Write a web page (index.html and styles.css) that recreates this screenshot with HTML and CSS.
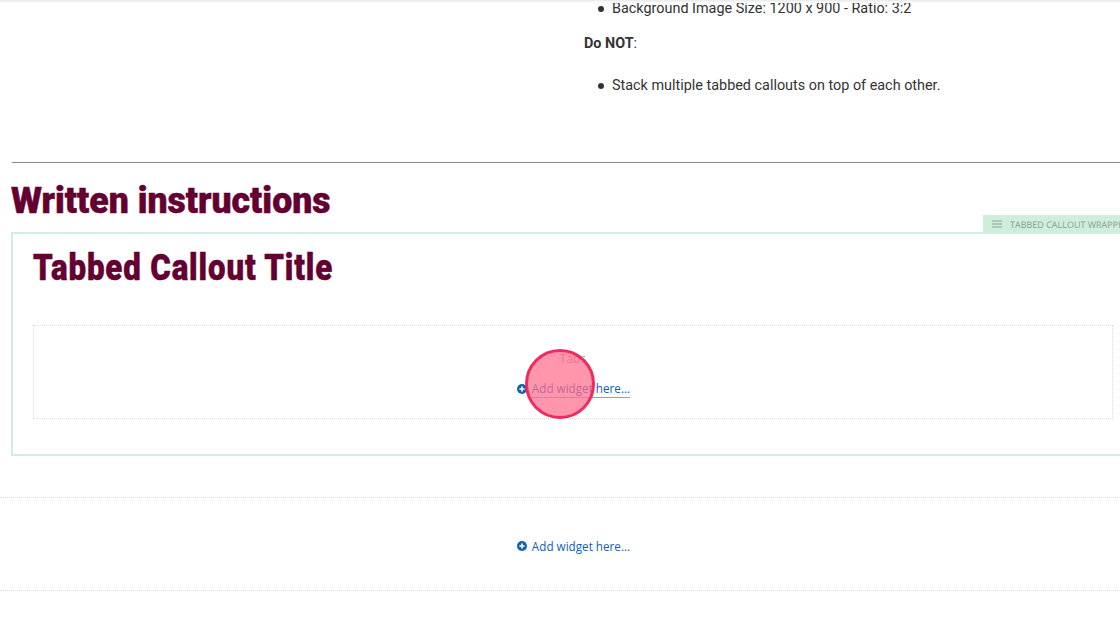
FILE: index.html
```html
<!DOCTYPE html>
<html lang="en">
<head>
    <meta charset="UTF-8">
    <meta name="viewport" content="width=device-width, initial-scale=1.0">
    <title>Written instructions</title>
    <link rel="stylesheet" href="styles.css">
</head>
<body>
    <div class="top-shadow"></div>
    <div class="page">
        <div class="notes">
            <ul>
                <li>Background Image Size: 1200 x 900 - Ratio: 3:2</li>
            </ul>
            <p><strong>Do NOT</strong>:</p>
            <ul>
                <li>Stack multiple tabbed callouts on top of each other.</li>
            </ul>
        </div>
        <hr class="rule">
        <h2 class="section-title">Written instructions</h2>
        <div class="wrapper">
            <div class="wrapper-tag">
                <svg class="tag-icon" viewBox="0 0 10 8" width="10" height="8"><path d="M0 1h10M0 4h10M0 7h10" stroke="#8f9c94" stroke-width="1.2"/></svg>
                <span>TABBED CALLOUT WRAPPER</span>
            </div>
            <h2 class="callout-title">Tabbed Callout Title</h2>
            <div class="tabs-box">
                <div class="tabs-label">Tabs</div>
                <a class="add-widget underlined" href="#">
                    <svg viewBox="0 0 10 10" width="10" height="10"><circle cx="5" cy="5" r="5" fill="#0f62b5"/><path d="M5 2.4v5.2M2.4 5h5.2" stroke="#fff" stroke-width="1.7"/></svg>
                    <span>Add widget here...</span>
                </a>
            </div>
        </div>
        <div class="widget-row">
            <a class="add-widget" href="#">
                <svg viewBox="0 0 10 10" width="10" height="10"><circle cx="5" cy="5" r="5" fill="#0f62b5"/><path d="M5 2.4v5.2M2.4 5h5.2" stroke="#fff" stroke-width="1.7"/></svg>
                <span>Add widget here...</span>
            </a>
        </div>
    </div>
    <div class="click-spot"></div>
</body>
</html>
```

FILE: styles.css
```css
html, body {
    margin: 0;
    height: 626px;
    overflow: hidden;
    background-color: #fff;
}
.top-shadow {
    position: absolute;
    top: 0;
    left: 0;
    width: 100%;
    height: 3px;
    background: linear-gradient(#e9e9e9, #fff);
}
.page {
    width: 1120px;
    height: 626px;
    overflow: hidden;
    font-family: "Open Sans", sans-serif;
}
.notes {
    margin-left: 584px;
    margin-top: -2px;
    height: 164px;
    font-family: Roboto, "Liberation Sans", sans-serif;
    font-size: 14.4px;
    line-height: 22px;
    color: #333;
}
.notes ul {
    margin: 0;
    padding-left: 28px;
    list-style: none;
}
.notes li {
    display: flex;
    align-items: center;
    gap: 8px;
    margin-left: -14px;
}
.notes li::before {
    content: "";
    width: 6px;
    height: 6px;
    border-radius: 50%;
    background-color: #333;
}
.notes p {
    margin: 13px 0 20px;
}
.notes strong {
    font-weight: 700;
}
.rule {
    margin: 0 0 0 12px;
    width: 1200px;
    border: 0;
    border-top: 1px solid #888;
}
.section-title, .callout-title {
    margin: 0;
    font-family: Roboto, "Liberation Sans", sans-serif;
    font-weight: 900;
    color: #640031;
    -webkit-text-stroke: 0.5px #640031;
    transform-origin: left center;
    white-space: nowrap;
}
.section-title {
    margin: 17px 0 11px 11px;
    font-size: 37px;
    line-height: 41px;
    transform: scaleX(0.962);
}
.wrapper {
    position: relative;
    margin-left: 11px;
    width: 1200px;
    height: 220px;
    border: 2px solid #d2eedf;
}
.wrapper-tag {
    position: absolute;
    top: -19px;
    left: 970px;
    width: 200px;
    height: 17px;
    display: flex;
    align-items: center;
    gap: 8px;
    padding: 1px 0 0 9px;
    box-sizing: border-box;
    background-color: #cdeedb;
    color: #8f9c94;
    font-size: 9px;
    text-rendering: geometricPrecision;
    white-space: nowrap;
    overflow: hidden;
}
.callout-title {
    margin: 13px 0 0 20px;
    font-size: 37px;
    line-height: 41px;
    letter-spacing: 1px;
    transform: scaleX(0.845);
}
.tabs-box {
    margin: 37px 0 0 20px;
    width: 1078px;
    height: 92px;
    border: 1px dotted #ddd;
    display: flex;
    flex-direction: column;
    align-items: center;
}
.tabs-label {
    margin-top: 24px;
    font-size: 12px;
    line-height: 17px;
    color: #999;
}
.add-widget {
    display: flex;
    align-items: center;
    gap: 5px;
    margin-left: 1px;
    font-size: 11.7px;
    line-height: 17px;
    color: #0f62b5;
    text-decoration: none;
}
.tabs-box .add-widget {
    margin-top: 13px;
}
.underlined span {
    border-bottom: 1px solid #7fa6cc;
}
.widget-row {
    margin-top: 41px;
    padding: 4px 0 0 26px;
    height: 88px;
    border-top: 1px dotted #ddd;
    border-bottom: 1px dotted #ddd;
    display: flex;
    justify-content: center;
    align-items: center;
}
.click-spot {
    position: absolute;
    left: 525px;
    top: 349px;
    width: 64px;
    height: 64px;
    border: 3px solid #ee2a5f;
    border-radius: 50%;
    background-color: rgba(255, 110, 140, 0.72);
}
```
